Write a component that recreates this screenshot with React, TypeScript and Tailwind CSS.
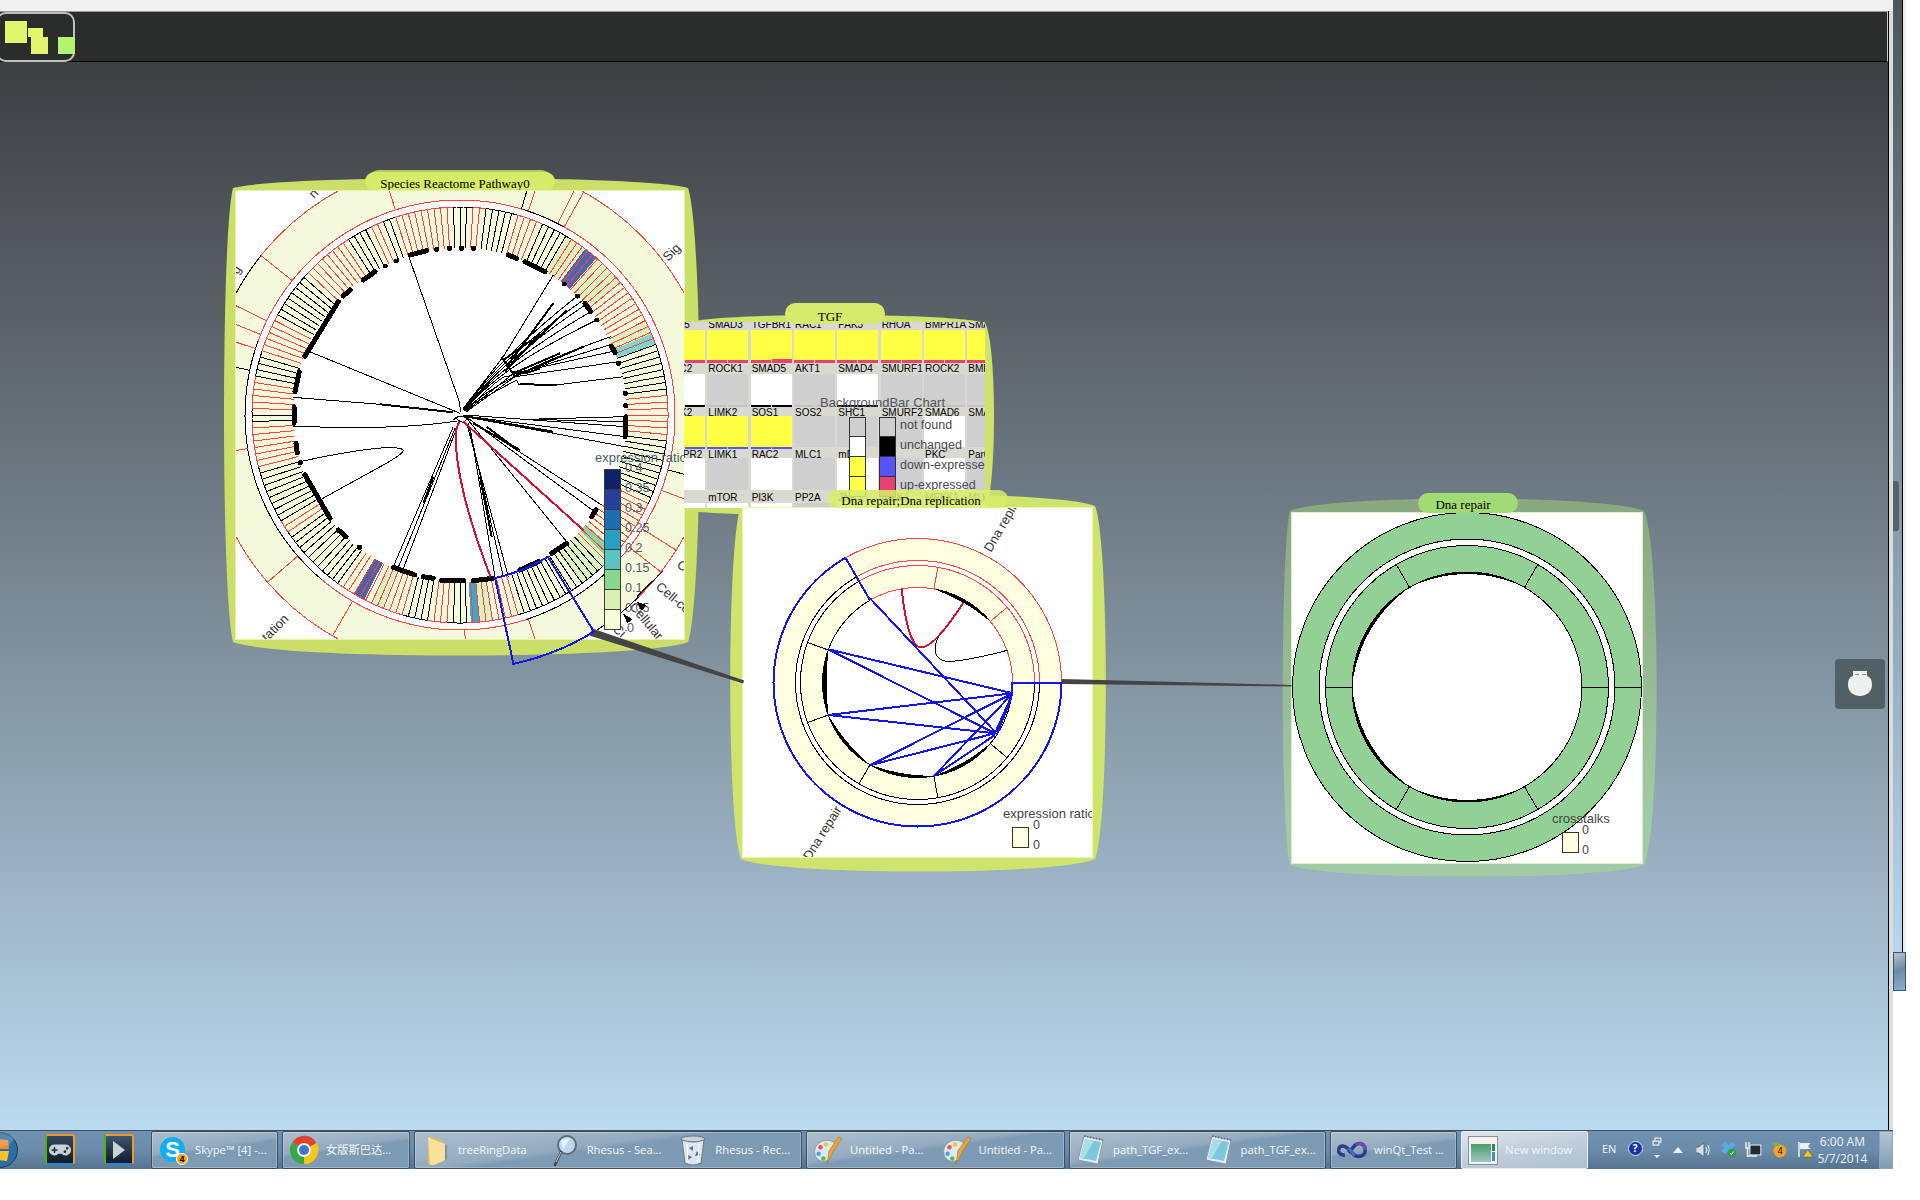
import React from "react";
import { FaGamepad } from "react-icons/fa";

type Pt = [number, number];
const pol = (cx: number, cy: number, r: number, a: number): Pt => {
  const t = (a * Math.PI) / 180;
  return [cx + r * Math.cos(t), cy + r * Math.sin(t)];
};
const f = (p: Pt) => `${p[0].toFixed(1)} ${p[1].toFixed(1)}`;
const arc = (cx: number, cy: number, r: number, a1: number, a2: number) => {
  const n = Math.max(2, Math.ceil(Math.abs(a2 - a1) / 3));
  let d = "M" + f(pol(cx, cy, r, a1));
  for (let i = 1; i <= n; i++) d += " L" + f(pol(cx, cy, r, a1 + ((a2 - a1) * i) / n));
  return d;
};
const seg = (cx: number, cy: number, r1: number, r2: number, a1: number, a2: number) =>
  arc(cx, cy, r2, a1, a2) + " L" + arc(cx, cy, r1, a2, a1).slice(1) + " Z";
const crescent = (cx: number, cy: number, r: number, a1: number, a2: number, w: number) => {
  const n = 24;
  let d = "M" + f(pol(cx, cy, r, a1));
  for (let i = 1; i <= n; i++) d += " L" + f(pol(cx, cy, r, a1 + ((a2 - a1) * i) / n));
  for (let i = n; i >= 0; i--)
    d += " L" + f(pol(cx, cy, r - w * Math.pow(Math.sin((Math.PI * i) / n), 0.6), a1 + ((a2 - a1) * i) / n));
  return d + " Z";
};
const blob = (l: number, t: number, r: number, b: number, dt: number, dr: number, db: number, dl: number) => {
  const w = r - l;
  const h = b - t;
  const k = 1.2;
  const s = 0.1;
  const e = 0.9;
  return `M${l} ${t} C${l + w * s} ${t - dt * k} ${l + w * e} ${t - dt * k} ${r} ${t} C${r + dr * k} ${t + h * s} ${r + dr * k} ${t + h * e} ${r} ${b} C${l + w * e} ${b + db * k} ${l + w * s} ${b + db * k} ${l} ${b} C${l - dl * k} ${t + h * e} ${l - dl * k} ${t + h * s} ${l} ${t} Z`;
};

/* ---- big chart (coordinates read off the 3x crop at origin 220,160) ---- */
const Z = (x: number, y: number): Pt => [220 + x / 3, 160 + y / 3];
const zp = (cmds: string) =>
  cmds.replace(/(-?\d+(?:\.\d+)?),(-?\d+(?:\.\d+)?)/g, (_, a, b) => f(Z(+a, +b)));

const C1: Pt = [460, 415];
const blackRanges: Pt[] = [[340, 353], [6, 24], [45, 73], [87, 92], [98, 105], [125, 145], [148, 165], [178, 181], [190, 198], [208, 222], [236, 244], [247, 251], [267, 273], [277, 286], [292, 301]];
const fills: [number, number, string][] = [
  [301, 307, "#dff0c0"], [307, 311, "#4a66ac"], [311, 320, "#dff0c0"], [333, 337, "#dff0c0"], [337, 340, "#7fd4cc"],
  [41, 44, "#8fd49a"], [44, 54, "#dff0c0"], [81, 84.5, "#dff0c0"], [84.5, 87, "#3fa8c8"], [112, 115, "#dff0c0"], [117.5, 120.5, "#4a62a8"],
];
const lineCol = (a: number) => (blackRanges.some(([s, e]) => a >= s && a < e) ? "#000" : "#ff4040");

const outerDiv: [number, string][] = [[252.5, "#ff4040"], [286.6, "#000"], [288.5, "#ff4040"], [297, "#ff4040"], [299, "#ff4040"], [14.8, "#000"], [20.5, "#ff4040"], [32, "#ff4040"], [38, "#ff4040"], [71.5, "#ff4040"], [88.7, "#ff4040"], [120, "#ff4040"], [139, "#ff4040"], [171, "#ff4040"], [192, "#000"], [198, "#ff4040"], [202, "#ff4040"], [206, "#ff4040"], [218.7, "#ff4040"]];

const dotRuns = "M570,285 L620,272 M650,268 L651,268 M688,265 L689,265 M724,265 L725,265 M760,265 L761,265 M865,285 L890,295 M915,305 L975,335 M1032,372 L1033,372 M1072,408 L1073,408 M1095,430 L1112,455 M1130,480 L1131,480 M1175,560 L1185,578 M1195,610 L1196,610 M1215,700 L1216,700 M1217,737 L1218,737 M1218,770 L1215,830 M1128,1050 L1115,1070 M1040,1150 L995,1180 M955,1205 L900,1230 M820,1255 L760,1262 M730,1262 L665,1262 M640,1255 L610,1250 M585,1245 L520,1222 M418,1162 L419,1162 M378,1130 L355,1110 M330,1075 L255,945 M240,908 L241,908 M232,878 L228,850 M225,695 L238,635 M255,588 L355,425 M390,390 L370,408 M465,335 L430,360 M495,318 L496,318 M528,303 L529,303 M222,740 L222,790";

const thinChords = [
  "M565,285 L718,725 L722,755",
  "M262,572 L720,760",
  "M218,712 L480,733 L700,757",
  "M218,798 Q520,812 712,783",
  "M240,905 C400,870 530,852 550,870 C555,885 450,935 300,1020",
  "M1000,345 L850,590 L730,745",
  "M1072,408 Q830,600 730,748",
  "M1090,420 Q830,605 730,750",
  "M1100,432 Q835,610 732,750",
  "M1112,455 Q830,620 733,752",
  "M1130,480 Q830,625 735,752",
  "M1172,530 Q830,650 735,752",
  "M1178,552 L860,650 Q850,640 736,754",
  "M1188,572 L880,640 Q870,650 737,754",
  "M1195,605 L885,650 L738,756",
  "M1210,650 L1000,676 L895,672 L890,660 L738,742",
  "M1215,770 L925,778 L1215,785",
  "M1215,800 L735,765",
  "M1215,830 L735,768",
  "M1215,860 L735,770",
  "M1145,1035 L735,770",
  "M1120,1052 L740,772",
  "M1040,1145 L740,775",
  "M865,1250 L740,790",
  "M850,1250 L745,790",
  "M825,1250 L750,800",
  "M520,1220 L700,800",
  "M535,1222 L705,805",
  "M550,1226 L708,810",
  "M700,780 Q720,760 740,775 Q730,800 705,770",
];
const thickChords = [
  "M845,590 L885,650 M850,600 L935,540 M860,620 L1000,430 M875,610 L1040,450 M855,635 L960,520",
  "M880,640 L1020,580 M880,650 L1090,560 M900,672 L1010,676 M880,635 Q900,650 960,625",
  "M780,950 L815,1130 M640,950 L610,1030",
  "M880,860 L800,800 M480,733 L700,757 M730,768 L1000,815 M760,790 L900,870",
];

function BigChart() {
  const cells: number[] = [];
  for (let a = 0; a < 360; a += 1.8) cells.push(a);
  return (
    <svg viewBox="236 191 448 448" shapeRendering="crispEdges" className="block w-full h-full">
      <circle cx={C1[0]} cy={C1[1]} r={255} fill="#f5fadc" stroke="#ff4040" />
      <circle cx={C1[0]} cy={C1[1]} r={215} fill="#fff" stroke="#ff4040" />
      <path d={arc(C1[0], C1[1], 255, 200, 218.7)} fill="none" stroke="#000" />
      <path d={arc(C1[0], C1[1], 255, 45.5, 58)} fill="none" stroke="#000" />
      <path d={arc(C1[0], C1[1], 215, 130, 200)} fill="none" stroke="#000" />
      <path d={arc(C1[0], C1[1], 215, 287, 299)} fill="none" stroke="#000" />
      <path d={arc(C1[0], C1[1], 215, 45, 72)} fill="none" stroke="#000" />
      {outerDiv.map(([a, c], i) => (
        <line key={i} x1={pol(C1[0], C1[1], 215, a)[0]} y1={pol(C1[0], C1[1], 215, a)[1]} x2={pol(C1[0], C1[1], 255, a)[0]} y2={pol(C1[0], C1[1], 255, a)[1]} stroke={c} />
      ))}
      <path d={seg(C1[0], C1[1], 167, 208, 0, 180)} fill="#f5fadc" />
      <path d={seg(C1[0], C1[1], 167, 208, 180, 360)} fill="#f5fadc" />
      {fills.map(([s, e, c], i) => (
        <path key={i} d={seg(C1[0], C1[1], 167, 208, s, e)} fill={c} />
      ))}
      {cells.map((a) => {
        const c = lineCol(a);
        const p = pol(C1[0], C1[1], 167, a);
        const q = pol(C1[0], C1[1], 208, a);
        return (
          <g key={a}>
            <line x1={p[0]} y1={p[1]} x2={q[0]} y2={q[1]} stroke={c} />
            <path d={arc(C1[0], C1[1], 208, a, a + 1.8)} fill="none" stroke={c} />
          </g>
        );
      })}
      <circle cx={C1[0]} cy={C1[1]} r={166} fill="#fff" />
      <path d={zp(dotRuns)} fill="none" stroke="#000" strokeWidth={5} strokeLinecap="round" />
      {thinChords.map((d, i) => (
        <path key={i} d={zp(d)} fill="none" stroke="#000" strokeWidth={1} />
      ))}
      {thickChords.map((d, i) => (
        <path key={i} d={zp(d)} fill="none" stroke="#000" strokeWidth={2} />
      ))}
      <path d={zp("M1090,1110 L730,785")} fill="none" stroke="#d90f2d" strokeWidth={2} />
      <path d={zp("M812,1252 Q700,960 708,810 L718,785")} fill="none" stroke="#d90f2d" strokeWidth={2} />
      <g fontFamily='"Liberation Sans", sans-serif' fontSize={13} fill="#333" shapeRendering="auto">
        <text transform="translate(668 262) rotate(-45)">Sig</text>
        <text transform="translate(267 642) rotate(-45)">tation</text>
        <text transform="translate(314 199) rotate(-45)">n</text>
        <text transform="translate(238 275) rotate(-60)">g</text>
        <text transform="translate(655 588) rotate(40)">Cell-ce</text>
        <text transform="translate(629 607) rotate(50)">Cellular</text>
        <text transform="translate(612 630) rotate(42)">Ci</text>
        <text transform="translate(676 566) rotate(40)">C</text>
      </g>
      <path d={zp("M1250,1310 L1330,1232")} fill="none" stroke="#000" />
      {["#0c2369", "#253f9a", "#1f6cb0", "#28a0c4", "#5bc4c0", "#88d78f", "#d9efb4", "#f8fcd9"].map((c, i) => (
        <rect key={c} x={604.5} y={469.5 + i * 20} width={16} height={20} fill={c} stroke="#3c3c3c" />
      ))}
      <g fontFamily='"Liberation Sans", sans-serif' fontSize={12.5} fill="#4b5a6a">
        <text x={595} y={462} fontSize={13}>expression ratio</text>
        {["0.4", "0.35", "0.3", "0.25", "0.2", "0.15", "0.1", "0.05", "0"].map((t, i) => (
          <text key={t} x={i === 8 ? 627 : 625} y={472 + i * 20}>{t}</text>
        ))}
      </g>
      <path d={zp("M1250,1325 L1280,1335 L1265,1352 Z M1208,1360 L1238,1378 L1222,1390 Z")} fill="#000" />
    </svg>
  );
}

/* ---- middle chart (3x crop at origin 730,490) ---- */
const Y = (x: number, y: number): Pt => [730 + x / 3, 490 + y / 3];
const yp = (cmds: string) => cmds.replace(/(-?\d+(?:\.\d+)?),(-?\d+(?:\.\d+)?)/g, (_, a, b) => f(Y(+a, +b)));

function MidChart() {
  const c: Pt = [917.5, 682.5];
  const div = [0, 40, 80, 120, 160, 200, 240, 280, 320];
  const redA = [280, 320];
  return (
    <svg viewBox="743 508 349 349" shapeRendering="crispEdges" className="block w-full h-full">
      <circle cx={c[0]} cy={c[1]} r={144} fill="#fefee0" />
      <circle cx={c[0]} cy={c[1]} r={122} fill="#fff" />
      <circle cx={c[0]} cy={c[1]} r={117} fill="#fefee0" />
      <path d={arc(c[0], c[1], 144, 240, 360)} fill="none" stroke="#ff4040" />
      <path d={arc(c[0], c[1], 122, 240, 360)} fill="none" stroke="#ff4040" />
      <path d={arc(c[0], c[1], 122, 0, 240)} fill="none" stroke="#000" />
      <path d={arc(c[0], c[1], 117, 240, 360)} fill="none" stroke="#ff4040" />
      <path d={arc(c[0], c[1], 117, 0, 240)} fill="none" stroke="#000" />
      <circle cx={c[0]} cy={c[1]} r={95} fill="#fff" />
      <path d={arc(c[0], c[1], 95, 240, 360)} fill="none" stroke="#ff4040" />
      <path d={arc(c[0], c[1], 95, 120, 240)} fill="none" stroke="#000" />
      <path d={arc(c[0], c[1], 95, 0, 120)} fill="none" stroke="#000" />
      {div.map((a) => {
        const p = pol(c[0], c[1], 95, a);
        const q = pol(c[0], c[1], 117, a);
        return <line key={a} x1={p[0]} y1={p[1]} x2={q[0]} y2={q[1]} stroke={redA.includes(a) ? "#ff4040" : a === 0 ? "transparent" : "#000"} />;
      })}
      <path d={crescent(c[0], c[1], 95.5, 280, 320, 3.5)} fill="#000" />
      <path d={crescent(c[0], c[1], 95.5, 160, 200, 4.5)} fill="#000" />
      <path d={crescent(c[0], c[1], 95.5, 120, 160, 3.5)} fill="#000" />
      <path d={crescent(c[0], c[1], 95.5, 80, 120, 3.5)} fill="#000" />
      <path d={crescent(c[0], c[1], 95.5, 40, 80, 3.5)} fill="#000" />
      <path d={yp("M640,420 C600,470 610,510 655,515 C720,510 780,495 835,480")} fill="none" stroke="#000" />
      <path d={yp("M515,295 C525,400 545,475 575,472 C610,470 660,400 700,338")} fill="none" stroke="#d90f2d" strokeWidth={2} />
      <path
        d={yp("M295,478 L848,610 M295,478 L795,730 M295,675 L848,610 M295,675 L795,730 M422,825 L848,610 M422,825 L795,730 M612,858 L848,610 M612,858 L795,735 M420,325 L795,725 M848,610 L795,730 M845,620 L800,735")}
        fill="none"
        stroke="#1414ee"
        strokeWidth={2}
      />
      <path d={arc(c[0], c[1], 144, 0, 240)} fill="none" stroke="#1414ee" strokeWidth={2} />
      <path d={`M${f(pol(c[0], c[1], 144, 240))} L${f(pol(c[0], c[1], 95, 240))}`} fill="none" stroke="#1414ee" strokeWidth={2} />
      <path d={`M${f(pol(c[0], c[1], 144, 0))} L${f(pol(c[0], c[1], 95, 0))}`} fill="none" stroke="#1414ee" strokeWidth={2} />
      <path d={arc(c[0], c[1], 95, 0, 10)} fill="none" stroke="#1414ee" strokeWidth={2} />
      <g fontFamily='"Liberation Sans", sans-serif' fontSize={13} fill="#333">
        <text transform="translate(991 553) rotate(-60)">Dna repli</text>
        <text transform="translate(810 861) rotate(-58)">Dna repair</text>
      </g>
      <g fontFamily='"Liberation Sans", sans-serif' fontSize={12.5} fill="#444">
        <text x={1003} y={818} fontSize={13}>expression ratio</text>
        <text x={1033} y={829}>0</text>
        <text x={1033} y={849}>0</text>
      </g>
      <rect x={1012.5} y={827.5} width={16} height={20} fill="#fefee0" stroke="#333" />
    </svg>
  );
}

function RightChart() {
  const c: Pt = [1467, 686];
  const thin: [number, number, number][] = [
    [240, 300, 2.6], [180, 240, 3.4], [120, 180, 3.4], [60, 120, 2.6],
  ];
  return (
    <svg viewBox="1292 512 350 350" shapeRendering="crispEdges" className="block w-full h-full">
      <circle cx={c[0]} cy={c[1]} r={174.5} fill="#93d095" stroke="#000" />
      <circle cx={c[0]} cy={c[1]} r={148} fill="#fff" stroke="#000" />
      <circle cx={c[0]} cy={c[1]} r={141.5} fill="#93d095" stroke="#000" />
      <circle cx={c[0]} cy={c[1]} r={115} fill="#fff" stroke="#000" />
      {[0, 60, 120, 180, 240, 300].map((a) => {
        const p = pol(c[0], c[1], 115, a);
        const q = pol(c[0], c[1], 141.5, a);
        return <line key={a} x1={p[0]} y1={p[1]} x2={q[0]} y2={q[1]} stroke="#000" />;
      })}
      <line x1={1614} y1={686.5} x2={1642} y2={686.5} stroke="#000" />
      {thin.map(([a, b, w]) => (
        <path key={a} d={crescent(c[0], c[1], 115.5, a, b, w)} fill="#000" />
      ))}
      <g fontFamily='"Liberation Sans", sans-serif' fill="#444">
        <text x={1552} y={822} fontSize={13}>crosstalks</text>
        <text x={1582} y={833} fontSize={12.5}>0</text>
        <text x={1582} y={853} fontSize={12.5}>0</text>
      </g>
      <rect x={1562.5} y={831.5} width={16} height={20} fill="#fefee0" stroke="#333" />
    </svg>
  );
}

/* ---- TGF heat map ---- */
type Cell = { l: string; c: string; bar?: string; raised?: boolean };
const Y_ = "bg-[#ffff44]";
const G_ = "bg-[#cfcfcf]";
const W_ = "bg-white";
const rows: { h: string; block: string; barH: string; cells: Cell[] }[] = [
  {
    h: "h-[10px]",
    block: "h-[30px]",
    barH: "h-[3px]",
    cells: [
      { l: "PAK5", c: Y_, bar: "bg-[#e8436a]" }, { l: "SMAD3", c: Y_, bar: "bg-[#e8436a]" }, { l: "TGFBR1", c: Y_, bar: "bg-[#e8436a]", raised: true },
      { l: "RAC1", c: Y_, bar: "bg-[#e8436a]" }, { l: "PAK3", c: Y_, bar: "bg-[#e8436a]" }, { l: "RHOA", c: Y_, bar: "bg-[#e8436a]" },
      { l: "BMPR1A", c: Y_, bar: "bg-[#e8436a]" }, { l: "SMAD1", c: Y_, bar: "bg-[#e8436a]" },
    ],
  },
  {
    h: "h-[11px]",
    block: "h-[31px]",
    barH: "h-[2px]",
    cells: [
      { l: "CDC2", c: W_, bar: "bg-black" }, { l: "ROCK1", c: G_, bar: "bg-[#c4c4bc]" }, { l: "SMAD5", c: W_, bar: "bg-black" }, { l: "AKT1", c: G_, bar: "bg-[#c4c4bc]" },
      { l: "SMAD4", c: W_, bar: "bg-black" }, { l: "SMURF1", c: G_, bar: "bg-[#c4c4bc]" }, { l: "ROCK2", c: G_, bar: "bg-[#c4c4bc]" }, { l: "BMPR2", c: G_, bar: "bg-[#c4c4bc]" },
    ],
  },
  {
    h: "h-[9px] pt-[2px]",
    block: "h-[31px]",
    barH: "h-[2px]",
    cells: [
      { l: "MEK2", c: Y_, bar: "bg-[#5555ff]" }, { l: "LIMK2", c: Y_, bar: "bg-[#5555ff]" }, { l: "SOS1", c: Y_, bar: "bg-[#5555ff]" }, { l: "SOS2", c: G_ },
      { l: "SHC1", c: G_ }, { l: "SMURF2", c: G_ }, { l: "SMAD6", c: W_ }, { l: "SMAD7", c: G_ },
    ],
  },
  {
    h: "h-[9px] pt-[2px]",
    block: "h-[32px]",
    barH: "h-[2px]",
    cells: [
      { l: "\u00A0BMPR2", c: W_ }, { l: "LIMK1", c: G_ }, { l: "RAC2", c: W_ }, { l: "MLC1", c: G_ },
      { l: "mDia", c: W_ }, { l: "Abl", c: G_ }, { l: "PKC", c: W_ }, { l: "Par6", c: G_ },
    ],
  },
  {
    h: "h-[11px]",
    block: "h-[8px]",
    barH: "h-[2px]",
    cells: [
      { l: "", c: W_ }, { l: "mTOR", c: W_ }, { l: "PI3K", c: W_ }, { l: "PP2A", c: G_ },
      { l: "JNK", c: W_ }, { l: "MEK4", c: W_ }, { l: "MEKK1", c: W_ }, { l: "MLK", c: W_ },
    ],
  },
];

function Heat() {
  return (
    <div className="absolute left-[0px] top-[9px] w-[301px] h-[186px] overflow-hidden bg-[#d9d9d1]">
      <div className="ml-[-20px] mt-[-2px] flex flex-col">
        {rows.map((r, i) => (
          <div key={i} className="flex gap-[2.33px]">
            {r.cells.map((c, j) => (
              <div key={j} className="w-[41px] shrink-0">
                <div className={`${r.h} box-border flex items-center whitespace-nowrap text-[10px] leading-none text-black pl-[1px]`}>{c.l}</div>
                <div className={`${r.block} ${c.c}`} />
                {c.bar ? (
                  <div className={`${r.barH} flex gap-[1px]`}>
                    <div className={`flex-1 ${c.bar}`} />
                    <div className={`flex-1 ${c.bar} ${c.raised ? "-mt-[1px]" : ""}`} />
                  </div>
                ) : (
                  <div className={r.barH} />
                )}
              </div>
            ))}
          </div>
        ))}
      </div>
      {/* bar chart legend overlay */}
      <div className="absolute left-[136px] top-[74px] text-[13px] leading-none text-[#55555a] whitespace-nowrap">BackgroundBar Chart</div>
      <div className="absolute left-[165px] top-[95px] flex gap-[13px]">
        <div className="w-[17px] flex flex-col">
          <div className="h-[20px] bg-[#cfcfcf] border border-[#333]" />
          <div className="h-[20px] bg-white border border-t-0 border-[#333]" />
          <div className="h-[20px] bg-[#ffff44] border border-t-0 border-[#333]" />
          <div className="h-[20px] bg-[#ffff44] border border-t-0 border-[#333]" />
        </div>
        <div className="w-[17px] flex flex-col">
          <div className="h-[20px] bg-[#cfcfcf] border border-[#333]" />
          <div className="h-[20px] bg-black border border-t-0 border-[#333]" />
          <div className="h-[20px] bg-[#5555ff] border border-t-0 border-[#333]" />
          <div className="h-[20px] bg-[#e84070] border border-t-0 border-[#333]" />
        </div>
      </div>
      <div className="absolute left-[216px] top-[93px] flex flex-col text-[12.5px] leading-[20px] text-[#4a4a50] whitespace-nowrap">
        <span>not found</span>
        <span>unchanged</span>
        <span>down-expressed</span>
        <span>up-expressed</span>
      </div>
    </div>
  );
}

function Title({ children }: { children: React.ReactNode }) {
  return <span className="text-[13px] leading-none text-black whitespace-nowrap">{children}</span>;
}

/* ---- taskbar icons ---- */
const SkypeIcon = () => (
  <div className="relative w-[28px] h-[30px]">
    <div className="absolute left-[1px] top-[2px] w-[25px] h-[25px] rounded-full bg-[#0faef0] flex items-center justify-center text-white font-bold text-[22px] leading-none">S</div>
    <div className="absolute left-[17px] top-[18px] w-[12px] h-[12px] rounded-full bg-[#ffa200] border border-white text-[9px] leading-[10px] text-black text-center font-bold">4</div>
  </div>
);
const ChromeIcon = () => (
  <svg width="30" height="30" viewBox="0 0 30 30">
    <path d="M15 15 L3.5 7 A14 14 0 0 1 27.5 8 Z" fill="#e2412c" />
    <path d="M15 15 L27.5 8 A14 14 0 0 1 15 29 Z" fill="#f5c518" />
    <path d="M15 15 L15 29 A14 14 0 0 1 3.5 7 Z" fill="#3ba54a" />
    <circle cx="15" cy="15" r="7" fill="#eef2f6" />
    <circle cx="15" cy="15" r="5" fill="#3f78c8" />
  </svg>
);
const FolderIcon = () => (
  <svg width="30" height="32" viewBox="0 0 30 32">
    <path d="M7 3 L18 5 L22 8 L22 28 L9 31 L7 30 Z" fill="#e5bc5c" />
    <path d="M7 3 L13 6 L24 10 L24 26 L13 31 L9 31 Z" fill="#f8e29a" />
    <path d="M24 10 L26 12 L26 25 L24 26 Z" fill="#5f6a70" opacity="0.5" />
  </svg>
);
const SearchIcon = () => (
  <svg width="30" height="32" viewBox="0 0 30 32">
    <circle cx="17" cy="11" r="9" fill="#bcd7f0" stroke="#5e6c78" strokeWidth="2" />
    <path d="M11 6 L20 4 L13 16 Z" fill="#e6f2fc" />
    <path d="M11 18 L5 31" stroke="#3f3f3f" strokeWidth="2.5" strokeLinecap="round" />
    <path d="M11 18 L6 28" stroke="#d2d6da" strokeWidth="1" />
  </svg>
);
const BinIcon = () => (
  <svg width="30" height="32" viewBox="0 0 30 32">
    <ellipse cx="15" cy="5" rx="12" ry="3" fill="#c9d2da" stroke="#6c7882" />
    <path d="M4 6 L7 29 Q15 33 23 29 L26 6 Q15 10 4 6 Z" fill="#dde4ea" stroke="#6c7882" />
    <path d="M11 14 L15 12 L15 17 Z M19 17 L22 21 L17 22 Z M10 21 L14 23 L10 26 Z" fill="#3d79c8" />
    <path d="M9 10 L10 28 M21 10 L20 28" stroke="#fff" strokeWidth="1" />
  </svg>
);
const PaintIcon = () => (
  <svg width="32" height="32" viewBox="0 0 32 32">
    <path d="M2 20 C0 10 10 4 18 6 C26 8 26 14 20 15 C16 16 18 20 18 24 C16 30 4 30 2 20 Z" fill="#dfe8ee" stroke="#8a9aa8" />
    <circle cx="8" cy="13" r="2.4" fill="#e25b4e" />
    <circle cx="14" cy="10" r="2.4" fill="#f1c533" />
    <circle cx="6" cy="20" r="2.4" fill="#49a5dc" />
    <circle cx="11" cy="25" r="2.4" fill="#57b95a" />
    <path d="M27 2 L31 4 L22 17 L15 31 L17 17 Z" fill="#e8a33a" stroke="#a9712a" strokeWidth="0.6" />
  </svg>
);
const NoteIcon = () => (
  <svg width="30" height="32" viewBox="0 0 30 32">
    <path d="M8 2 L27 6 L22 30 L2 26 Z" fill="#e9eef2" stroke="#8b99a5" />
    <path d="M9 5 L25 8 L20 27 L4 24 Z" fill="#7cc7d9" />
    <path d="M9 5 L18 7 L8 24 L4 24 Z" fill="#a7e0ea" />
    <path d="M8 2 L27 6" stroke="#6a7680" strokeWidth="2" strokeDasharray="1.5 1.5" />
  </svg>
);
const VsIcon = () => (
  <svg width="34" height="30" viewBox="0 0 34 30">
    <path d="M9 21 C3 21 1 17 2 14 C3 10 8 9 12 13 L20 21 C25 24 32 22 32 15 C32 8 26 6 21 9 L13 18" fill="none" stroke="#2f3c8e" strokeWidth="4" />
    <path d="M13 13 L20 21" stroke="#3a73c9" strokeWidth="3" />
    <path d="M21 9 C26 6 32 8 32 15" fill="none" stroke="#6c4fb0" strokeWidth="4" />
  </svg>
);
const WinIcon = () => (
  <div className="w-[30px] h-[29px] bg-[#f3f4f0] border border-[#8a9298] flex gap-[1px] p-[2px]">
    <div className="flex-1 mt-[5px] bg-gradient-to-b from-[#4b9e6a] to-[#9fc6c4]" />
    <div className="w-[3px] mt-[5px] flex flex-col gap-[1px]">
      <div className="h-[7px] bg-[#2e8a5a]" />
      <div className="h-[9px] bg-[#4a8cc0]" />
    </div>
  </div>
);

function TaskItem({ icon, text, active }: { icon: React.ReactNode; text: string; active?: boolean }) {
  return (
    <div className="flex items-center flex-1 min-w-0 pl-[6px] gap-[7px]">
      <div className="w-[30px] shrink-0 flex justify-center">{icon}</div>
      <span className={`text-[11.25px] leading-none whitespace-nowrap font-['Open_Sans','Noto_Sans_CJK_SC',sans-serif] ${active ? "text-[#f2f5f8]" : "text-[#f4f7fa]"}`}>{text}</span>
    </div>
  );
}

function TaskGroup({ className, children, active }: { className: string; children: React.ReactNode; active?: boolean }) {
  return (
    <div
      className={`${className} h-[38px] flex border rounded-[2px] ${
        active
          ? "border-[#e8eef3] bg-[linear-gradient(170deg,#dfe6ec_0%,#c2d0dc_45%,#aebfce_100%)]"
          : "border-[#3d5063] shadow-[inset_0_0_0_1px_rgba(255,255,255,0.25)] bg-[linear-gradient(172deg,#aebfce_0%,#93abc0_42%,#7e9bb5_48%,#7d9ab5_100%)]"
      }`}
    >
      {children}
    </div>
  );
}

export default function App() {
  const canvasSquares = (
    <div className="relative h-[51px] shrink-0 w-full border-t border-r border-t-[#9a9a9a] border-r-[#c8c8c8] border-b border-b-black bg-[#2b2c2c]">
      <div className="absolute -left-[4px] top-0 w-[79px] h-[50px] border-2 border-[#c0c0c0] rounded-[10px]" />
      <div className="absolute left-[5px] top-[9px] w-[22px] h-[22px] bg-[#e2f56d]" />
      <div className="absolute left-[28px] top-[16px] w-[15px] h-[9px] bg-[#e2f56d]" />
      <div className="absolute left-[31px] top-[25px] w-[17px] h-[17px] bg-[#e2f56d]" />
      <div className="absolute left-[58px] top-[25px] w-[17px] h-[17px] bg-[#b2f46f]" />
    </div>
  );

  return (
    <div className="relative flex w-[1920px] h-[1200px] overflow-hidden bg-white font-['Liberation_Sans',sans-serif]">
      <div className="flex flex-col w-[1893px] h-[1169px]">
        <div className="h-[11px] bg-[#f0f0f0]" />
        <div className="flex flex-1 min-h-0">
          {/* window */}
          <div className="flex flex-col w-[1888px] border-r border-black box-content">
            {canvasSquares}
            <div className="relative flex-1 overflow-hidden bg-gradient-to-b from-[#3e4042] to-[#bbdaf0]">
              {/* panel: Species Reactome Pathway0 */}
              <div className="absolute left-[220px] top-[108px] w-[484px] h-[492px]">
                <svg viewBox="220 170 484 492" className="absolute inset-0 w-full h-full">
                  <path d={blob(233, 188, 688, 642, 11, 13, 15, 10)} fill="#cbde68" />
                </svg>
                <div className="absolute left-[147px] top-0 w-[186px] h-[21px] rounded-t-[14px] rounded-b-[10px] bg-[#b8c55e]" />
                <div className="absolute left-[145px] top-[2px] w-[190px] h-[19px] rounded-full bg-[#d6ec68] flex items-center justify-center pt-[3px] pr-[10px] font-['Liberation_Serif',serif]">
                  <Title>Species Reactome Pathway0</Title>
                </div>
                <div className="absolute left-[16px] top-[21px] w-[448px] h-[448px] bg-white border border-[#e8f2a8] box-content -m-px">
                  <BigChart />
                </div>
              </div>

              {/* panel: Dna repair;Dna replication — backing shape */}
              <div className="absolute left-[725px] top-[428px] w-[390px] h-[450px]">
                <svg viewBox="725 490 390 450" className="absolute inset-0 w-full h-full">
                  <path d={blob(741, 506, 1095, 859, 13, 12, 14, 12)} fill="#cfe46c" />
                </svg>
              </div>

              {/* panel: TGF */}
              <div className="absolute left-[684px] top-[251px] w-[312px] h-[205px]">
                <svg viewBox="684 313 312 205" className="absolute inset-0 w-full h-full">
                  <path d={blob(684, 323, 985, 510, 9, 10, 6, 0)} fill="#cee36a" />
                </svg>
                <div className="absolute left-[0px] top-[0px] w-[301px] h-[195px]">
                  <Heat />
                </div>
                <div className="absolute left-[101px] top-[-10px] w-[100px] h-[21px] rounded-full bg-[#d6ea6c] flex items-center justify-center pt-[5px] pr-[10px] font-['Liberation_Serif',serif]">
                  <Title>TGF</Title>
                </div>
              </div>

              {/* panel: Dna repair;Dna replication — content */}
              <div className="absolute left-[742px] top-[445px] w-[351px] h-[351px] bg-white border border-[#eef6a8] box-border">
                <MidChart />
              </div>
              <div className="absolute left-[828px] top-[428px] w-[180px] h-[18px] rounded-full bg-[#d8ee6a]/85 flex items-center justify-center pt-[3px] pr-[14px] font-['Liberation_Serif',serif]">
                <Title>Dna repair;Dna replication</Title>
              </div>

              {/* panel: Dna repair */}
              <div className="absolute left-[1280px] top-[431px] w-[380px] h-[450px]">
                <svg viewBox="1280 492 380 450" className="absolute inset-0 w-full h-full">
                  <defs>
                    <linearGradient id="g4" x1="0" y1="0" x2="0" y2="0.85">
                      <stop offset="0" stopColor="#8aa880" />
                      <stop offset="1" stopColor="#a1cba4" />
                    </linearGradient>
                  </defs>
                  <path d={blob(1290, 510, 1644, 864, 14, 14, 13, 8)} fill="url(#g4)" />
                </svg>
                <div className="absolute left-[11px] top-[19px] w-[352px] h-[352px] bg-white border border-[#d8f0c8]">
                  <RightChart />
                </div>
                <div className="absolute left-[138px] top-0 w-[100px] h-[20px] rounded-full bg-[#a2da74] flex items-center justify-center pt-[3px] pr-[10px] font-['Liberation_Serif',serif]">
                  <Title>Dna repair</Title>
                </div>
              </div>

              {/* links drawn over the canvas */}
              <svg viewBox="0 62 1888 1069" className="absolute inset-0 w-full h-full pointer-events-none">
                <path d="M592 629 L589 636 L743 684 L744 681 Z" fill="#444" />
                <path d="M1062 679.5 L1292 685.5 L1292 687 L1062 684.5 Z" fill="#444" />
                <path
                  d={`${arc(C1[0], C1[1], 167, 78, 58.4)} L${f(pol(C1[0], C1[1], 255, 58.4))} ${arc(C1[0], C1[1], 255, 58.4, 78).replace("M", "L")} Z`}
                  fill="none"
                  stroke="#1414ee"
                  strokeWidth={2}
                  shapeRendering="crispEdges"
                />
              </svg>

              <div className="absolute left-[1835px] top-[597px] w-[50px] h-[50px] rounded-[4px] bg-[#515f67] flex items-center justify-center">
                <svg width="24" height="26" viewBox="0 0 24 26">
                  <path d="M5 0 H19 V5 C22 6 24 8 24 14 C24 21 18 25 12 25 C6 25 0 21 0 14 C0 8 2 6 5 5 Z" fill="#edf0ef" />
                  <path d="M7 3 H11 V4 H7 Z M14 3 H18 V4 H14 Z" fill="#8d9699" />
                </svg>
              </div>
            </div>
          </div>
          {/* window edge */}
          <div className="w-[4px] bg-[#dcdcdc]" />
        </div>
        {/* taskbar */}
        <div className="relative h-[39px] shrink-0 flex items-center bg-gradient-to-b from-[#6f91af] via-[#6b8cab] to-[#55738f] border-t border-[#3d5063]">
          <div className="relative w-[151px] h-full shrink-0">
            <svg width="24" height="38" viewBox="0 0 24 38" className="absolute left-0 top-0">
              <circle cx="0" cy="19" r="17.5" fill="#2a6ea6" stroke="#123a5e" />
              <path d="M-4 8 L8 9 L9 18 L-4 18 Z" fill="#f08a2c" />
              <path d="M-4 20 L9 20 L7 30 L-4 29 Z" fill="#f4c12f" />
              <path d="M-17 19 A17 17 0 0 1 14 8 L9 14 Z" fill="#ffffff" opacity="0.18" />
            </svg>
            <div className="absolute left-[45px] top-[3px] w-[30px] h-[31px] rounded-[3px] border-2 border-t-[#f29a1f] border-r-[#f29a1f] border-b-[#1f88d6] border-l-[#52b400] bg-gradient-to-b from-[#33485f] to-[#121d2c] flex items-center justify-center">
              <FaGamepad className="text-[#c9d0d6]" size={22} />
            </div>
            <div className="absolute left-[104px] top-[3px] w-[30px] h-[31px] rounded-[3px] border-2 border-t-[#f29a1f] border-r-[#f29a1f] border-b-[#1f88d6] border-l-[#52b400] bg-gradient-to-b from-[#3c5672] to-[#121d2c] flex items-center justify-center">
              <svg width="14" height="18" viewBox="0 0 14 18">
                <path d="M1 0 L13 9 L1 18 Z" fill="#ccd2d8" />
              </svg>
            </div>
          </div>
          <TaskGroup className="w-[127px] shrink-0">
            <TaskItem icon={<SkypeIcon />} text="Skype™ [4] -..." />
          </TaskGroup>
          <TaskGroup className="w-[128px] shrink-0 ml-[4px]">
            <TaskItem icon={<ChromeIcon />} text="女版斯巴达..." />
          </TaskGroup>
          <TaskGroup className="w-[388px] shrink-0 ml-[4px]">
            <TaskItem icon={<FolderIcon />} text="treeRingData" />
            <TaskItem icon={<SearchIcon />} text="Rhesus - Sea..." />
            <TaskItem icon={<BinIcon />} text="Rhesus - Rec..." />
          </TaskGroup>
          <TaskGroup className="w-[259px] shrink-0 ml-[4px]">
            <TaskItem icon={<PaintIcon />} text="Untitled - Pa..." />
            <TaskItem icon={<PaintIcon />} text="Untitled - Pa..." />
          </TaskGroup>
          <TaskGroup className="w-[257px] shrink-0 ml-[4px]">
            <TaskItem icon={<NoteIcon />} text="path_TGF_ex..." />
            <TaskItem icon={<NoteIcon />} text="path_TGF_ex..." />
          </TaskGroup>
          <TaskGroup className="w-[127px] shrink-0 ml-[4px]">
            <TaskItem icon={<VsIcon />} text="winQt_Test ..." />
          </TaskGroup>
          <TaskGroup className="w-[127px] shrink-0 ml-[4px]" active>
            <TaskItem icon={<WinIcon />} text="New window" active />
          </TaskGroup>
          {/* tray */}
          <div className="flex items-center flex-1 min-w-0 h-full pl-[14px] font-['Open_Sans',sans-serif] text-[#eef2f6]">
            <span className="text-[11px] leading-none w-[20px] -mt-[3px]">EN</span>
            <div className="ml-[6px] w-[15px] h-[15px] rounded-full bg-[#1c35a5] border border-[#d8dde2] text-white text-[10px] leading-[13px] font-bold text-center -mt-[4px]">?</div>
            <svg className="ml-[9px] -mt-[2px]" width="10" height="24" viewBox="0 0 10 24">
              <rect x="3" y="1" width="6" height="4" fill="none" stroke="#fff" />
              <rect x="1" y="4" width="6" height="4" fill="#6b8cab" stroke="#fff" />
              <path d="M2 18 L8 18 L5 21 Z" fill="#fff" />
            </svg>
            <svg className="ml-[11px] -mt-[1px]" width="10" height="6" viewBox="0 0 10 6">
              <path d="M0 6 L5 0 L10 6 Z" fill="#eef2f6" />
            </svg>
            <svg className="ml-[13px] -mt-[1px]" width="16" height="16" viewBox="0 0 16 16">
              <path d="M0 5 H3 L8 1 V15 L3 11 H0 Z" fill="#d8dee4" stroke="#3a4a58" strokeWidth="0.6" />
              <path d="M10 5 Q12 8 10 11 M12 3 Q15 8 12 13" fill="none" stroke="#eef2f6" />
            </svg>
            <svg className="ml-[9px] -mt-[1px]" width="17" height="17" viewBox="0 0 17 17">
              <path d="M1 4 L5 1 L8.5 4 L12 1 L16 4 L12.5 7 L16 10 L12 13 L8.5 10 L5 13 L1 10 L4.5 7 Z" fill="#5aa8e6" />
              <circle cx="12" cy="12" r="4.5" fill="#2f9e44" />
              <path d="M10 12 L11.5 13.5 L14 10.5" stroke="#fff" fill="none" />
            </svg>
            <svg className="ml-[8px] -mt-[1px]" width="17" height="17" viewBox="0 0 17 17">
              <rect x="5" y="4" width="11" height="10" fill="#1f2a33" stroke="#eef2f6" />
              <path d="M1 1 V7 H4 V1 M2.5 7 V15 H12" fill="none" stroke="#eef2f6" strokeWidth="1.4" />
            </svg>
            <svg className="ml-[10px] -mt-[1px]" width="16" height="17" viewBox="0 0 16 17">
              <circle cx="8" cy="10" r="6.5" fill="#f6a51e" />
              <path d="M1 2 Q6 1 8 4 Q4 6 2 5 Z" fill="#7db33c" />
              <text x="8" y="13.5" fontSize="9" textAnchor="middle" fill="#000">4</text>
            </svg>
            <svg className="ml-[9px] -mt-[1px]" width="17" height="17" viewBox="0 0 17 17">
              <path d="M2 1 V16" stroke="#eef2f6" strokeWidth="1.5" />
              <path d="M3 2 H14 L11 5 L14 8 H3 Z" fill="#eef2f6" />
              <path d="M11 9 L16 16 H6 Z" fill="#f5c518" stroke="#6a5a10" strokeWidth="0.4" />
            </svg>
            <div className="ml-auto mr-[8px] w-[58px] flex flex-col items-center text-[12px] leading-[17px] text-[#eef2f6]">
              <span>6:00 AM</span>
              <span>5/7/2014</span>
            </div>
            <div className="w-[14px] h-full border border-[#8da3b6] bg-gradient-to-b from-[#b6c6d4] to-[#7f9cb6]" />
          </div>
        </div>
      </div>
      {/* scroll column */}
      <div className="relative w-[13px] h-[991px] flex shrink-0">
        <div className="relative w-[10px] h-[952px] bg-gradient-to-b from-[#4d575b] to-[#b8d8ef] border-r border-black box-content">
          <div className="absolute left-0 top-[481px] w-[6px] h-[50px] rounded-r-[3px] bg-[#566469]" />
        </div>
        <div className="w-[3px] h-[952px] bg-[#efefef]" />
        <div className="absolute left-0 top-[952px] w-[13px] h-[39px] border border-[#3d5670] bg-[linear-gradient(160deg,#b9c6d0_0%,#6b8aa8_45%,#89aecb_100%)]" />
      </div>
    </div>
  );
}
